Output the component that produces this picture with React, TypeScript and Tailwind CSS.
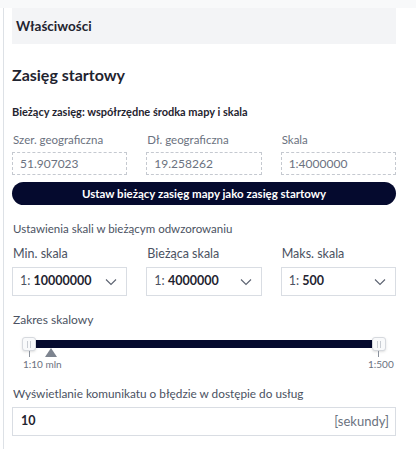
import React from "react";

function Chevron() {
  return (
    <svg width="12" height="8" viewBox="0 0 12 8" fill="none" stroke="#5b6270" strokeWidth="1.1">
      <path d="M1 1.5l5 5 5-5" />
    </svg>
  );
}

function Select({ value }: { value: string }) {
  return (
    <div className="flex h-[29px] items-center justify-between border border-[#d9dde3] bg-white pl-[7px] pr-[9px]">
      <span className="text-[12.5px] text-[#1f2430]">
        <span className="text-[#4b5262]">1: </span>
        <span className="font-bold">{value}</span>
      </span>
      <Chevron />
    </div>
  );
}

export default function App() {
  return (
    <div
      className="h-[449px] w-[416px] overflow-hidden bg-white text-[#1f2430]"
      style={{ fontFamily: 'Lato, "Noto Sans", sans-serif' }}
    >
      <div className="h-[8px] bg-[#f8f9fa]" />
      <div className="ml-[3px] h-[441px] border-l border-[#dde1e6] pl-[8px] pr-[20px]">
        <div className="flex h-[36px] items-center bg-[#f3f4f6] px-[4px]">
          <span className="text-[13.5px] font-bold">Właściwości</span>
        </div>
        <h2 className="mt-[20px] text-[16px] font-bold leading-[22px]">Zasięg startowy</h2>
        <p className="mt-[19px] text-[11px] font-bold leading-[14px]">
          Bieżący zasięg: współrzędne środka mapy i skala
        </p>
        <div className="mt-[14px] grid grid-cols-3 gap-x-[19px]">
          {[
            ["Szer. geograficzna", "51.907023"],
            ["Dł. geograficzna", "19.258262"],
            ["Skala", "1:4000000"],
          ].map(([l, v]) => (
            <div key={l}>
              <div className="pl-px text-[11.5px] leading-[14px] text-[#6b7280]">{l}</div>
              <div className="mt-[5px] flex h-[23px] items-center border border-dashed border-[#c5c9d0] px-[7px] text-[12px] text-[#6b7280]">
                {v}
              </div>
            </div>
          ))}
        </div>
        <button className="mt-[7px] flex h-[23px] w-full items-center justify-center rounded-full bg-[#050a2e] text-[11.5px] font-bold text-white">
          Ustaw bieżący zasięg mapy jako zasięg startowy
        </button>
        <p className="mt-[16px] pl-px text-[11.5px] leading-[16px] text-[#4b5262]">
          Ustawienia skali w bieżącym odwzorowaniu
        </p>
        <div className="mt-[9px] grid grid-cols-3 gap-x-[19px]">
          {[
            ["Min. skala", "10000000"],
            ["Bieżąca skala", "4000000"],
            ["Maks. skala", "500"],
          ].map(([l, v]) => (
            <div key={l}>
              <div className="pl-px text-[12.5px] leading-[16px] text-[#4b5262]">{l}</div>
              <div className="mt-[5px]">
                <Select value={v} />
              </div>
            </div>
          ))}
        </div>
        <p className="mt-[16px] pl-px text-[12px] leading-[16px] text-[#4b5262]">Zakres skalowy</p>
        <div className="relative h-[44px]">
          <div className="absolute left-[24px] right-[24px] top-[12px] h-[8px] bg-[#050a2e]" />
          <div className="absolute left-[10px] top-[9px] flex h-[14px] w-[14px] items-center justify-center gap-[2px] rounded-[3px] border border-[#d6d9de] bg-[#f9fafb] shadow-sm">
            <span className="h-[7px] w-px bg-[#c9cdd3]" />
            <span className="h-[7px] w-px bg-[#c9cdd3]" />
          </div>
          <div className="absolute left-[360px] top-[9px] flex h-[14px] w-[14px] items-center justify-center gap-[2px] rounded-[3px] border border-[#d6d9de] bg-[#f9fafb] shadow-sm">
            <span className="h-[7px] w-px bg-[#c9cdd3]" />
            <span className="h-[7px] w-px bg-[#c9cdd3]" />
          </div>
          <div className="absolute left-[17px] top-[23px] h-[6px] w-px bg-[#8a919c]" />
          <div className="absolute left-[366px] top-[23px] h-[6px] w-px bg-[#8a919c]" />
          <svg className="absolute left-[33px] top-[20px]" width="12" height="9" viewBox="0 0 12 9">
            <path d="M6 0L12 9H0z" fill="#7d848f" />
          </svg>
          <div className="absolute left-[11px] top-[30px] text-[10px] leading-[12px] text-[#6b7280]">1:10 mln</div>
          <div className="absolute left-[356px] top-[30px] text-[10px] leading-[12px] text-[#6b7280]">1:500</div>
        </div>
        <p className="mt-[14px] pl-px text-[11.8px] leading-[16px] text-[#4b5262]">
          Wyświetlanie komunikatu o błędzie w dostępie do usług
        </p>
        <div className="mt-[5px] flex h-[29px] items-center justify-between border border-[#d9dde3] pl-[8px] pr-[6px]">
          <span className="text-[12.5px] font-bold">10</span>
          <span className="text-[13px] text-[#6b7280]">[sekundy]</span>
        </div>
      </div>
    </div>
  );
}
